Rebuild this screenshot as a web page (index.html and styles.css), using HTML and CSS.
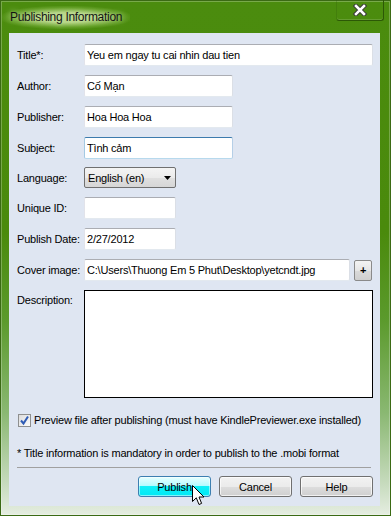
FILE: index.html
```html
<!DOCTYPE html>
<html lang="en">
<head>
    <meta charset="UTF-8">
    <meta name="viewport" content="width=device-width, initial-scale=1.0">
    <title>Publishing Information</title>
    <link rel="stylesheet" href="styles.css">
</head>
<body>
    <div class="window">
        <div class="titlebar">
            <span class="caption">Publishing Information</span>
            <span class="close">
                <svg width="14" height="12" viewBox="0 0 14 12">
                    <path d="M3 2 L11 10 M11 2 L3 10" stroke="#3a3a3a" stroke-width="4.5" stroke-linecap="square"/>
                    <path d="M3 2 L11 10 M11 2 L3 10" stroke="#fff" stroke-width="2.5" stroke-linecap="square"/>
                </svg>
            </span>
        </div>

        <div class="client">
            <div class="row first">
                <label>Title*:</label>
                <input class="field wide" type="text" value="Yeu em ngay tu cai nhin dau tien">
            </div>
            <div class="row">
                <label>Author:</label>
                <input class="field medium" type="text" value="Cố Mạn">
            </div>
            <div class="row">
                <label>Publisher:</label>
                <input class="field medium" type="text" value="Hoa Hoa Hoa">
            </div>
            <div class="row">
                <label>Subject:</label>
                <input class="field medium focused" type="text" value="Tình cảm">
            </div>
            <div class="row lang">
                <label>Language:</label>
                <div class="combo">
                    <span>English (en)</span>
                    <svg width="7" height="4" viewBox="0 0 7 4"><path d="M0 0 H7 L3.5 4 Z" fill="#000"/></svg>
                </div>
            </div>
            <div class="row">
                <label>Unique ID:</label>
                <input class="field short" type="text" value="">
            </div>
            <div class="row">
                <label>Publish Date:</label>
                <input class="field short" type="text" value="2/27/2012">
            </div>
            <div class="row">
                <label>Cover image:</label>
                <input class="field cover" type="text" value="C:\Users\Thuong Em 5 Phut\Desktop\yetcndt.jpg">
                <span class="browse">+</span>
            </div>
            <div class="row desc">
                <label>Description:</label>
                <textarea class="description"></textarea>
            </div>

            <div class="preview">
                <span class="check">
                    <svg width="11" height="11" viewBox="0 0 11 11"><path d="M2 5.5 L4.5 8.5 L9 1.5" fill="none" stroke="#2f5cb5" stroke-width="2"/></svg>
                </span>
                <span>Preview file after publishing (must have KindlePreviewer.exe installed)</span>
            </div>

            <p class="note">* Title information is mandatory in order to publish to the .mobi format</p>
            <div class="separator"></div>

            <div class="buttons">
                <button class="btn default">Publish
                    <svg class="cursor" width="13" height="21" viewBox="0 0 13 21">
                        <path d="M0.5 0.5 V16.5 L4.3 12.8 L7 19.5 L9.6 18.4 L7 12 H12 Z" fill="#fff" stroke="#000" stroke-width="1" stroke-linejoin="miter"/>
                    </svg>
                </button>
                <button class="btn">Cancel</button>
                <button class="btn">Help</button>
            </div>
        </div>
    </div>
</body>
</html>
```

FILE: styles.css
```css
:root {
    --client-bg: #dfe6f2;
    --frame-dark: #2c5806;
    --text-color: #000;
}

html, body {
    margin: 0;
    padding: 0;
}

body {
    width: 391px;
    height: 516px;
    overflow: hidden;
    font-family: "Liberation Sans", Arial, sans-serif;
    font-size: 11px;
    letter-spacing: -0.2px;
    color: var(--text-color);
    background: #dfe9d8;
}

.window {
    width: 391px;
    height: 516px;
    box-sizing: border-box;
    display: flex;
    flex-direction: column;
    background: linear-gradient(to bottom, #4b8c0e 0%, #4a8a0c 45%, #5b9a2c 62%, #8ab872 80%, #c8dcbf 94%, #e6eee2 100%);
    box-shadow: inset 0 0 0 1px #3b6a14, inset 0 0 0 2px rgba(255, 255, 255, 0.25);
}

.titlebar {
    height: 33px;
    display: flex;
    justify-content: space-between;
    align-items: flex-start;
}

.caption {
    margin: 6px 0 0 2px;
    padding: 4px 8px;
    font-size: 12px;
    line-height: 15px;
    letter-spacing: -0.3px;
    color: #141414;
    background: radial-gradient(ellipse at center, rgba(214, 236, 170, 0.75) 30%, rgba(150, 200, 90, 0.35) 60%, rgba(75, 140, 14, 0) 75%);
    text-shadow: 0 0 6px rgba(230, 245, 200, 0.9);
}

.close {
    width: 46px;
    height: 20px;
    margin-right: 7px;
    display: flex;
    align-items: center;
    justify-content: center;
    border: 1px solid var(--frame-dark);
    border-top: none;
    border-left-color: rgba(44, 88, 6, 0.25);
    border-radius: 0 0 3px 3px;
    box-shadow: inset 0 -1px 0 rgba(255, 255, 255, 0.15);
}

.client {
    margin: 0 11px 0 9px;
    height: 473px;
    box-sizing: border-box;
    padding: 11px 7px 0 8px;
    background: var(--client-bg);
    display: flex;
    flex-direction: column;
}

.row {
    display: flex;
    align-items: center;
    margin-top: 9px;
    height: 22px;
}

.row.first {
    margin-top: 0;
}

.row.lang {
    margin-top: 8px;
    height: 21px;
}

.row.desc {
    align-items: flex-start;
    height: 108px;
}

.row label {
    width: 67px;
    flex-shrink: 0;
}

.row.desc label {
    padding-top: 4px;
}

.field {
    box-sizing: border-box;
    height: 22px;
    margin: 0;
    padding: 0 2px;
    font: inherit;
    letter-spacing: inherit;
    color: var(--text-color);
    background: #fff;
    border: 1px solid;
    border-color: #abadb3 #dbdfe6 #e3e9ef #e2e3ea;
    border-radius: 2px;
    outline: none;
}

.field.focused {
    border-color: #3d7bad #b5cfe7 #b7d9ed #a4c9e3;
}

.wide {
    width: 289px;
}

.medium {
    width: 149px;
}

.short {
    width: 92px;
}

.cover {
    width: 266px;
}

.browse {
    box-sizing: border-box;
    width: 18px;
    height: 21px;
    margin-left: 4px;
    display: flex;
    align-items: center;
    justify-content: center;
    font-size: 11px;
    font-weight: bold;
    border: 1px solid #8a8a8a;
    border-radius: 2px;
    background: linear-gradient(#f3f3f3, #e6e6e6 50%, #dadada 51%, #cfcfcf);
}

.combo {
    box-sizing: border-box;
    width: 92px;
    height: 21px;
    display: flex;
    align-items: center;
    justify-content: space-between;
    padding: 0 4px 0 3px;
    border: 1px solid #707070;
    border-radius: 2px;
    background: linear-gradient(#f4f4f4, #ebebeb 50%, #e0e0e0 51%, #d6d6d6);
}

.description {
    box-sizing: border-box;
    width: 290px;
    height: 108px;
    margin: 0;
    border: 1px solid #000;
    background: #fff;
    resize: none;
    outline: none;
}

.preview {
    display: flex;
    align-items: center;
    margin-top: 16px;
    height: 13px;
    line-height: 13px;
}

.check {
    box-sizing: border-box;
    width: 13px;
    height: 13px;
    margin: 0 3px 0 1px;
    display: flex;
    align-items: center;
    justify-content: center;
    border: 1px solid #8e8f8f;
    background: linear-gradient(135deg, #dcdcdc, #fbfbfb);
}

.note {
    margin: 20px 0 0 0;
    line-height: 13px;
}

.separator {
    width: 354px;
    height: 1px;
    margin-top: 7px;
    background: #a0a0a0;
}

.buttons {
    display: flex;
    justify-content: flex-end;
    gap: 8px;
    margin-top: 8px;
    padding-right: 0;
}

.btn {
    position: relative;
    box-sizing: border-box;
    width: 73px;
    height: 21px;
    padding: 0;
    font: inherit;
    letter-spacing: inherit;
    color: #000;
    border: 1px solid #707070;
    border-radius: 3px;
    background: linear-gradient(#f2f2f2, #ebebeb 50%, #dddddd 51%, #cfcfcf);
    box-shadow: inset 0 0 0 1px rgba(255, 255, 255, 0.7);
}

.btn.default {
    border-color: #3c7fb1;
    background: linear-gradient(#e8ffff, #b6fbff 45%, #10f0f8 50%, #00e8f4);
    box-shadow: inset 0 0 0 1px rgba(255, 255, 255, 0.5);
}

.cursor {
    position: absolute;
    left: 53px;
    top: 8px;
}
```
